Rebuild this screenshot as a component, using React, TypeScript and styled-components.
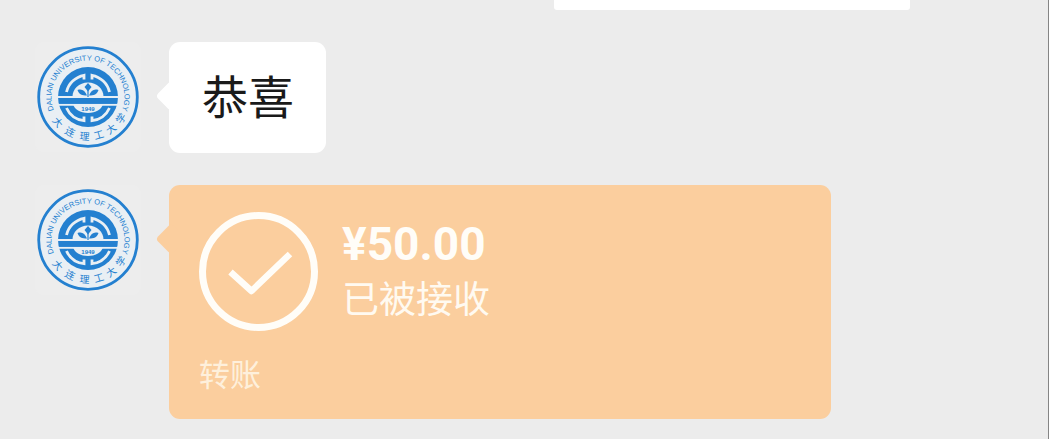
import React from "react";
import styled, { createGlobalStyle } from "styled-components";

const GlobalStyle = createGlobalStyle`
  * { box-sizing: border-box; }
  body {
    margin: 0;
    background: #ececec;
    font-family: "Noto Sans CJK SC", "Noto Sans", sans-serif;
  }
`;

const Chat = styled.main`
  display: flex;
  flex-direction: column;
  gap: 32px;
  min-height: 100vh;
  padding: 0 138px 20px 33px;
  border-right: 1px solid #858585;
  background: #ececec;
`;

const SentBubble = styled.div`
  align-self: flex-end;
  width: 356px;
  max-width: 60%;
  height: 10px;
  border-radius: 0 0 3px 3px;
  background: #ffffff;
`;

const MessageRow = styled.article`
  display: flex;
  align-items: flex-start;
  gap: 26px;
`;

const Avatar = styled.svg`
  flex: none;
  width: 110px;
  height: 110px;
`;

const Bubble = styled.div<{ $color: string }>`
  position: relative;
  border-radius: 11px;
  background: ${(p) => p.$color};

  &::before {
    content: "";
    position: absolute;
    top: 43px;
    left: -9px;
    width: 22px;
    height: 22px;
    border-radius: 4px;
    background: inherit;
    transform: rotate(45deg);
  }
`;

const TextBubble = styled(Bubble)`
  padding: 19px 32px 26px 33px;
  color: #1a1a1a;
  font-size: 46px;
  line-height: 66px;
`;

const TransferBubble = styled(Bubble)`
  flex: 0 1 662px;
  padding: 27px 30px 26px;
`;

const TransferHead = styled.div`
  display: flex;
  align-items: center;
  gap: 24px;
`;

const StatusIcon = styled.svg`
  flex: none;
  width: 119px;
  height: 119px;
`;

const Amount = styled.div`
  color: #fffdf8;
  font-family: Roboto, "Noto Sans CJK SC", sans-serif;
  font-size: 46px;
  font-weight: 700;
  line-height: 52px;
`;

const Status = styled.div`
  color: #fffaf1;
  font-size: 37px;
  line-height: 55px;
`;

const Kind = styled.div`
  margin-top: 22px;
  color: #fef0dc;
  font-size: 31px;
  line-height: 40px;
`;

const BLUE = "#2480d0";
const PALE = "#e9eff4";

const motto = [
  { char: "大", angle: 50 },
  { char: "连", angle: 27 },
  { char: "理", angle: 5 },
  { char: "工", angle: -16 },
  { char: "大", angle: -36 },
  { char: "学", angle: -57 },
];

function UniversityAvatar({ id }: { id: string }) {
  return (
    <Avatar viewBox="0 0 110 110" role="img" aria-label="Dalian University of Technology">
      <defs>
        <path id={id} d="M54 91.500a36.500 36.500 0 1 1 2 0" />
      </defs>
      <rect x="2" width="106" height="110" rx="8" fill="#ededed" />
      <circle cx="55" cy="55" r="49.3" fill={PALE} stroke={BLUE} strokeWidth="2.8" />
      <text fill={BLUE} fontFamily='"Liberation Sans", sans-serif' fontSize="7.500" textAnchor="middle">
        <textPath href={`#${id}`} startOffset="50%">DALIAN UNIVERSITY OF TECHNOLOGY</textPath>
      </text>
      {motto.map(({ char, angle }) => (
        <text
          key={angle}
          x="55"
          y="98"
          fill={BLUE}
          fontSize="10"
          textAnchor="middle"
          transform={`rotate(${angle} 55 55)`}
        >
          {char}
        </text>
      ))}
      <circle cx="55" cy="55" r="30" fill={BLUE} />
      <g fill="none" stroke={PALE} strokeWidth="2.8">
        <path d="M33.500 50A22 22 0 0 1 51 33.300V37.500M76.500 50A22 22 0 0 0 59 33.300V37.500" />
        <path d="M33.500 66A22 22 0 0 0 51 78.700V74.500M76.500 66A22 22 0 0 1 59 78.700V74.500" />
      </g>
      <path d="M39.500 54.500C39.500 47 46 40.500 55 40.500S70.500 47 70.500 54.500Z" fill={PALE} />
      <path d="M40 62H70C68.500 67.500 63 71 55 71S41.500 67.500 40 62Z" fill={PALE} />
      <path d="M24.500 55H85.500M24.500 62.800H85.500" fill="none" stroke={PALE} strokeWidth="2" />
      <path d="M26 59H84" stroke={BLUE} strokeWidth="5.400" />
      <path
        d="M55 41L58.500 45L55 49.500L51.500 45ZM54 53.500C49 53.500 46 52.500 44.500 48C49 46.500 52 48.500 54 53.500ZM56 53.500C61 53.500 64 52.500 65.500 48C61 46.500 58 48.500 56 53.500Z"
        fill={BLUE}
      />
      <path d="M55 48V55" stroke={BLUE} strokeWidth="1.200" />
      <text x="55" y="68.500" fill={BLUE} fontFamily='"Liberation Sans", sans-serif' fontSize="6" fontWeight="700" textAnchor="middle">
        1949
      </text>
    </Avatar>
  );
}

export default function App() {
  return (
    <>
      <GlobalStyle />
      <Chat>
        <SentBubble />
        <MessageRow>
          <UniversityAvatar id="ring-first" />
          <TextBubble $color="#ffffff">恭喜</TextBubble>
        </MessageRow>
        <MessageRow>
          <UniversityAvatar id="ring-second" />
          <TransferBubble $color="#fbce9e">
            <TransferHead>
              <StatusIcon viewBox="0 0 119 119" fill="none" stroke="#fffdf8" aria-hidden="true">
                <circle cx="59.5" cy="59.5" r="56" strokeWidth="7" />
                <path d="M31.500 60L52.500 79L91 42" strokeWidth="6.500" strokeLinejoin="round" />
              </StatusIcon>
              <div>
                <Amount>¥50.00</Amount>
                <Status>已被接收</Status>
              </div>
            </TransferHead>
            <Kind>转账</Kind>
          </TransferBubble>
        </MessageRow>
      </Chat>
    </>
  );
}
